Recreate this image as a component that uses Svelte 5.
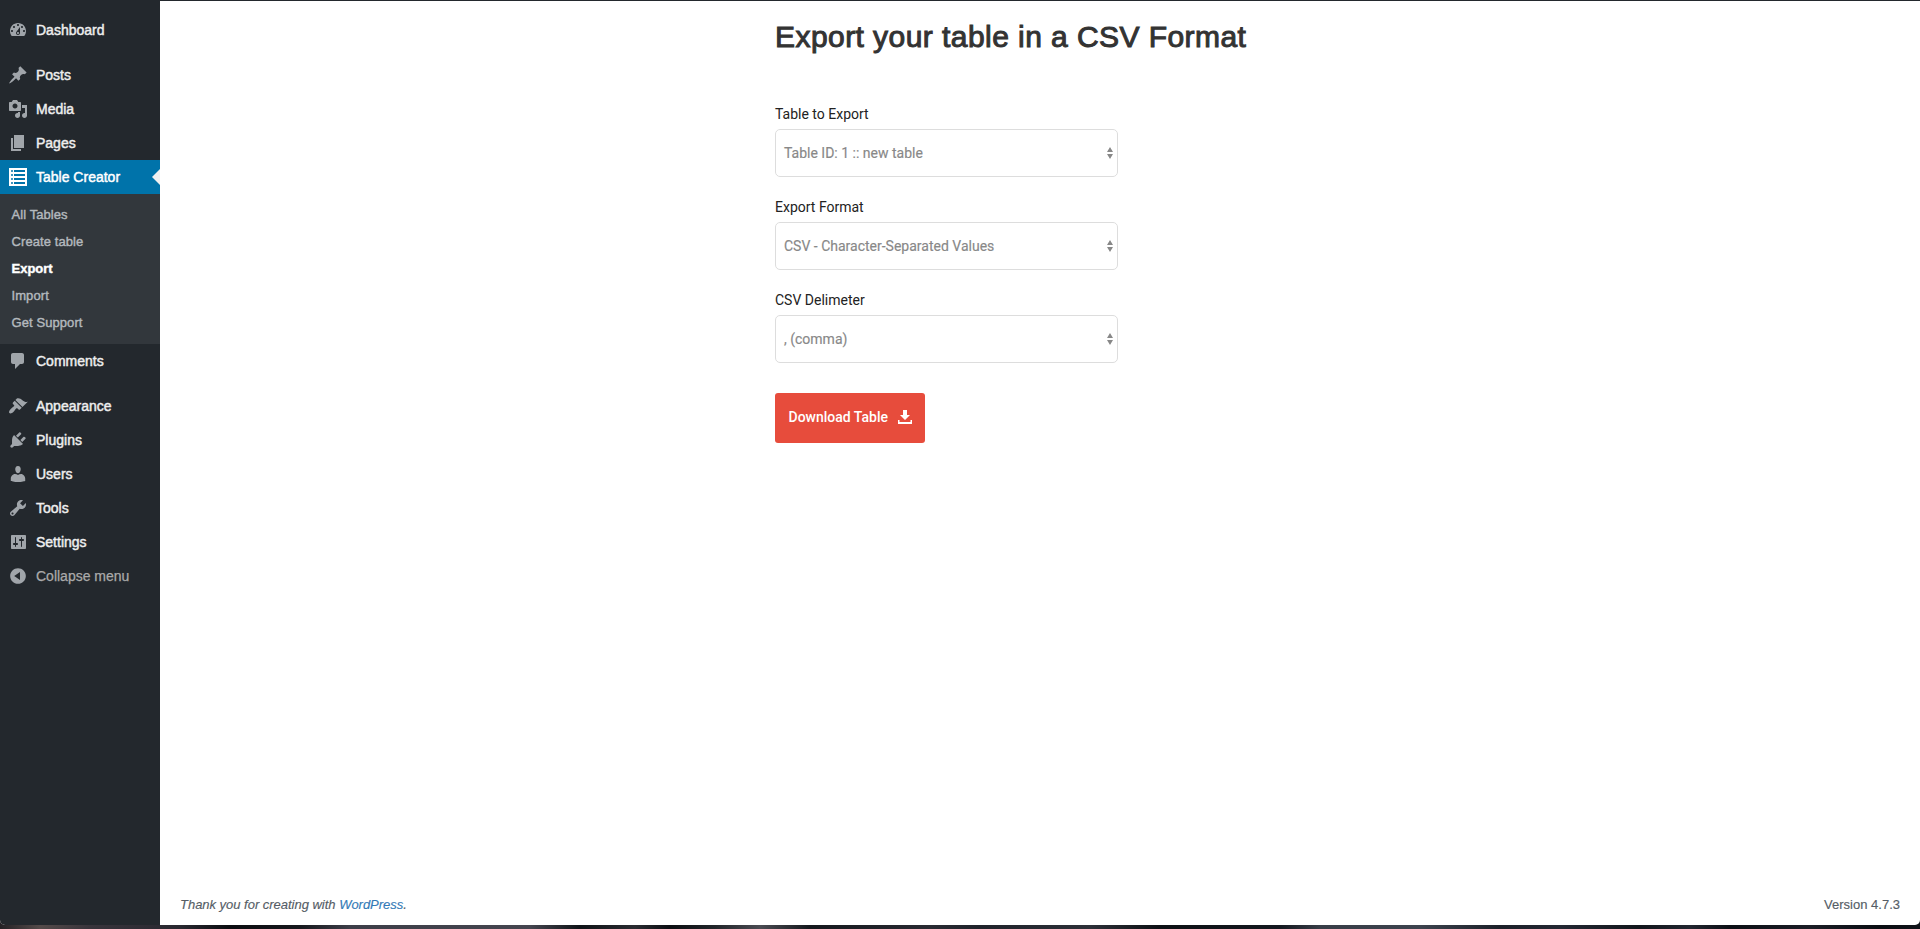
<script>
  const groups = [
    [{ label: 'Dashboard', icon: 'dashboard' }],
    [
      { label: 'Posts', icon: 'post' },
      { label: 'Media', icon: 'media' },
      { label: 'Pages', icon: 'page' },
      {
        label: 'Table Creator',
        icon: 'list',
        current: true,
        children: ['All Tables', 'Create table', 'Export', 'Import', 'Get Support']
      },
      { label: 'Comments', icon: 'comments' }
    ],
    [
      { label: 'Appearance', icon: 'appearance' },
      { label: 'Plugins', icon: 'plugins' },
      { label: 'Users', icon: 'users' },
      { label: 'Tools', icon: 'tools' },
      { label: 'Settings', icon: 'settings' },
      { label: 'Collapse menu', icon: 'collapse', muted: true }
    ]
  ];

  const icons = {
    dashboard:
      'M3.76 16h12.48c1.1-1.37 1.76-3.11 1.76-5 0-4.42-3.58-8-8-8s-8 3.58-8 8c0 1.89.66 3.63 1.76 5zM10 4c.55 0 1 .45 1 1s-.45 1-1 1-1-.45-1-1 .45-1 1-1zM6 6c.55 0 1 .45 1 1s-.45 1-1 1-1-.45-1-1 .45-1 1-1zm8 0c.55 0 1 .45 1 1s-.45 1-1 1-1-.45-1-1 .45-1 1-1zm-5.37 5.55L12 7v6c0 1.1-.9 2-2 2s-2-.9-2-2c0-.57.24-1.08.63-1.45zM4 10c.55 0 1 .45 1 1s-.45 1-1 1-1-.45-1-1 .45-1 1-1zm12 0c.55 0 1 .45 1 1s-.45 1-1 1-1-.45-1-1 .45-1 1-1zm-5 3c0-.55-.45-1-1-1s-1 .45-1 1 .45 1 1 1 1-.45 1-1z',
    post: 'M10.44 3.02l1.82-1.82 6.36 6.35-1.83 1.82c-1.05-.68-2.48-.57-3.41.36l-.75.75c-.92.93-1.04 2.35-.35 3.41l-1.83 1.82-2.41-2.41-2.8 2.79c-.42.42-3.38 2.71-3.8 2.29s1.86-3.39 2.28-3.81l2.79-2.79L4.1 9.36l1.83-1.82c1.05.69 2.48.57 3.4-.36l.75-.75c.93-.92 1.05-2.35.36-3.41z',
    media:
      'M13 11V4c0-.55-.45-1-1-1h-1.67L9 1H5L3.67 3H2c-.55 0-1 .45-1 1v7c0 .55.45 1 1 1h10c.55 0 1-.45 1-1zM7 4.5c1.38 0 2.5 1.12 2.5 2.5S8.38 9.5 7 9.5 4.5 8.38 4.5 7 5.62 4.5 7 4.5zM14 6h5v10.5c0 1.38-1.12 2.5-2.5 2.5S14 17.88 14 16.5s1.12-2.5 2.5-2.5c.17 0 .34.02.5.05V9h-3V6zm-4 8.05V13h2v3.5c0 1.38-1.12 2.5-2.5 2.5S7 17.88 7 16.5 8.12 14 9.5 14c.17 0 .34.02.5.05z',
    page: 'M6 15V2h10v13H6zm-1 1h8v2H3V5h2v11z',
    list: 'M1 1h18v18H1zM4 3a1 1 0 100 2 1 1 0 000-2zm2 0v2h11V3zM4 7a1 1 0 100 2 1 1 0 000-2zm2 0v2h11V7zM4 11a1 1 0 100 2 1 1 0 000-2zm2 0v2h11v-2zM4 15a1 1 0 100 2 1 1 0 000-2zm2 0v2h11v-2z',
    comments: 'M5 2h9c1.1 0 2 .9 2 2v7c0 1.1-.9 2-2 2h-2l-5 5v-5H5c-1.1 0-2-.9-2-2V4c0-1.1.9-2 2-2z',
    appearance:
      'M14.48 11.06L7.41 3.99l1.5-1.5c.5-.56 2.3-.47 3.51.32 1.21.8 1.43 1.28 2.91 2.1 1.18.64 2.45 1.26 4.45.85zm-.71.71L6.7 4.7 4.93 6.47c-.39.39-.39 1.02 0 1.41l1.06 1.06c.39.39.39 1.03 0 1.42-.6.6-1.43 1.11-2.21 1.69-.35.26-.7.53-1.01.84C1.43 14.23.4 16.08 1.4 17.07c.99 1 2.84-.03 4.18-1.36.31-.31.58-.66.85-1.02.57-.78 1.08-1.61 1.69-2.21.39-.39 1.02-.39 1.41 0l1.06 1.06c.39.39 1.02.39 1.41 0z',
    plugins:
      'M13.11 4.36L9.87 7.6 8 5.73l3.24-3.24c.35-.34 1.05-.2 1.56.32.52.51.66 1.21.31 1.55zm-8 1.77l.91-1.12 9.01 9.01-1.19.84c-.71.71-2.63 1.16-3.82 1.16H6.14L4.9 17.26c-.59.59-1.54.59-2.12 0-.59-.58-.59-1.53 0-2.12l1.24-1.24v-3.88c0-1.13.4-3.19 1.09-3.89zm7.26 3.97l3.24-3.24c.34-.35 1.04-.21 1.55.31.52.51.66 1.21.31 1.55l-3.24 3.25z',
    users:
      'M10 9.25c-2.27 0-2.73-3.44-2.73-3.44C7 4.02 7.82 2 9.97 2c2.16 0 2.98 2.02 2.71 3.81 0 0-.41 3.44-2.68 3.44zM10 11.1c.9-.7 1.9-1.1 3-1.1 2.4 0 4.2 2.5 4.2 4.6V17s-3.6 1.1-7.2 1.1S2.8 17 2.8 17v-2.4C2.8 12.5 4.6 10 7 10c1.1 0 2.1.4 3 1.1z',
    tools:
      'M16.68 9.77c-1.34 1.34-3.3 1.67-4.95.99l-5.41 6.52c-.99.99-2.59.99-3.58 0s-.99-2.59 0-3.57l6.52-5.42c-.68-1.65-.35-3.61.99-4.95 1.28-1.28 3.12-1.62 4.72-1.06l-2.89 2.89 2.82 2.82 2.86-2.87c.53 1.58.18 3.39-1.08 4.65zM3.81 16.21c.4.39 1.04.39 1.43 0 .4-.4.4-1.04 0-1.43-.39-.4-1.03-.4-1.43 0-.39.39-.39 1.03 0 1.43z',
    settings:
      'M18 16V4c0-.55-.45-1-1-1H4c-.55 0-1 .45-1 1v12c0 .55.45 1 1 1h13c.55 0 1-.45 1-1zM8 11h1c.55 0 1 .45 1 1s-.45 1-1 1H8v1.5c0 .28-.22.5-.5.5s-.5-.22-.5-.5V13H6c-.55 0-1-.45-1-1s.45-1 1-1h1V5.5c0-.28.22-.5.5-.5s.5.22.5.5V11zm5-2h-1c-.55 0-1-.45-1-1s.45-1 1-1h1V5.5c0-.28.22-.5.5-.5s.5.22.5.5V7h1c.55 0 1 .45 1 1s-.45 1-1 1h-1v5.5c0 .28-.22.5-.5.5s-.5-.22-.5-.5V9z',
    collapse:
      'M10 2.16c4.33 0 7.84 3.51 7.84 7.84s-3.51 7.84-7.84 7.84S2.16 14.33 2.16 10 5.71 2.16 10 2.16zm2 11.72V6.12L6.18 9.97z'
  };

  const fields = [
    { label: 'Table to Export', value: 'Table ID: 1 :: new table' },
    { label: 'Export Format', value: 'CSV - Character-Separated Values' },
    { label: 'CSV Delimeter', value: ', (comma)' }
  ];
</script>

<div class="screen">
  <div class="window">
    <nav class="menu">
      {#each groups as group}
        <ul class="group">
          {#each group as item}
            <li>
              <a class="item" class:current={item.current} class:muted={item.muted}>
                <svg class="icon" viewBox="0 0 20 20"><path fill-rule="evenodd" d={icons[item.icon]} /></svg>
                <span>{item.label}</span>
              </a>
              {#if item.children}
                <ul class="submenu">
                  {#each item.children as child}
                    <li class:active={child === 'Export'}><span>{child}</span></li>
                  {/each}
                </ul>
              {/if}
            </li>
          {/each}
        </ul>
      {/each}
    </nav>

    <main class="content">
      <section class="export">
        <h1><span>Export your table in a CSV Format</span></h1>
        {#each fields as field}
          <div class="field">
            <div class="label">{field.label}</div>
            <div class="select">
              <span>{field.value}</span>
              <svg width="6" height="12" viewBox="0 0 6 12"><path d="M3 0l3 5H0zM0 7h6l-3 5z" /></svg>
            </div>
          </div>
        {/each}
        <button class="download">
          <span>Download Table</span>
          <svg width="14" height="14" viewBox="0 0 14 14"
            ><path d="M5 0h4v5h3L7 10 2 5h3zM0 10h1.5v2h11v-2H14v4H0z" /></svg
          >
        </button>
      </section>
      <footer class="footer">
        <span class="thanks">Thank you for creating with <a class="wp">WordPress</a>.</span>
        <span class="version">Version 4.7.3</span>
      </footer>
    </main>
  </div>
</div>

<style>
  :global(body) {
    margin: 0;
    overflow: hidden;
  }
  .screen {
    box-sizing: border-box;
    width: 1920px;
    height: 929px;
    padding-bottom: 4px;
    font-family: 'Liberation Sans', Arial, sans-serif;
    background: linear-gradient(
      90deg, #242125 0, #544a49 40px, #38343b 90px, #292830 180px, #0b0c10 230px, #17181d 300px,
      #3d3e48 350px, #45454f 530px, #101317 580px, #2a2b31 635px, #0c0e12 670px, #22252a 715px,
      #4b4b52 760px, #15181d 810px, #292a32 930px, #20232b 980px, #2d3038 1090px, #0d1014 1160px,
      #14181f 1280px, #383d47 1320px, #3d434e 1420px, #1c2029 1500px, #242833 1560px, #12161c 1640px,
      #222630 1690px, #0c0f15 1730px, #1b1d26 1810px, #0a0d12 1880px, #101319 1920px
    );
  }
  .window {
    box-sizing: border-box;
    display: flex;
    height: 925px;
    border-top: 1px solid #23282d;
    border-radius: 0 0 5px 5px;
    overflow: hidden;
    background: #fff;
  }
  .menu {
    box-sizing: border-box;
    flex: none;
    display: flex;
    flex-direction: column;
    gap: 11px;
    width: 160px;
    padding-top: 12px;
    background: #23282d;
  }
  ul {
    margin: 0;
    padding: 0;
    list-style: none;
  }
  .item {
    display: flex;
    align-items: center;
    gap: 8px;
    height: 34px;
    padding-left: 8px;
    font-size: 14px;
    color: #eee;
    -webkit-text-stroke: 0.45px currentColor;
  }
  .icon {
    width: 20px;
    height: 20px;
    fill: #a0a5aa;
  }
  .muted {
    color: #aaa;
    -webkit-text-stroke: 0.25px currentColor;
  }
  .current {
    position: relative;
    background: #0073aa;
    color: #fff;
  }
  .current .icon {
    fill: #fff;
  }
  .current::after {
    content: '';
    position: absolute;
    right: 0;
    top: 9px;
    border: 8px solid transparent;
    border-left-width: 0;
    border-right-color: #f1f1f1;
  }
  .submenu {
    padding: 7px 0 8px 11.5px;
    background: #32373c;
    font-size: 13px;
    line-height: 27px;
    letter-spacing: 0.08px;
    color: #b4b9be;
    -webkit-text-stroke: 0.4px currentColor;
  }
  .active {
    color: #fff;
    font-weight: 700;
    letter-spacing: 0;
  }
  .content {
    flex: 1;
    display: flex;
    flex-direction: column;
    justify-content: space-between;
  }
  .export {
    width: 600px;
    margin-left: 615px;
    font-family: Roboto, sans-serif;
  }
  h1 {
    margin: 17px 0 58px;
    font: 400 30px/37px 'Liberation Sans', Arial, sans-serif;
    letter-spacing: 0.44px;
    color: #333;
    -webkit-text-stroke: 1px currentColor;
  }
  .field {
    height: 93px;
    font-size: 14px;
  }
  .label {
    height: 16px;
    line-height: 3px;
    color: #222;
  }
  .select {
    box-sizing: border-box;
    display: flex;
    align-items: center;
    justify-content: space-between;
    width: 343px;
    height: 48px;
    padding: 0 4px 0 8px;
    border: 1px solid #ddd;
    border-radius: 5px;
    color: #888;
    -webkit-text-stroke: 0.15px currentColor;
  }
  .select svg {
    fill: #888;
  }
  .download {
    display: flex;
    align-items: center;
    gap: 10.5px;
    width: 150px;
    height: 50px;
    margin-top: 1px;
    padding: 0 12px 2px 13.5px;
    border: 0;
    border-radius: 3px;
    background: #e74c3c;
    color: #fff;
    font: 500 14px Roboto, sans-serif;
    white-space: nowrap;
  }
  .download svg {
    fill: #fff;
  }
  .footer {
    display: flex;
    justify-content: space-between;
    padding: 0 20px 11px;
    font-size: 13px;
    line-height: 19px;
    color: #555d66;
  }
  .thanks {
    font-style: italic;
    letter-spacing: -0.02px;
    -webkit-text-stroke: 0.15px currentColor;
  }
  .version {
    -webkit-text-stroke: 0.15px currentColor;
  }
  .wp {
    color: #337ab7;
  }
</style>
